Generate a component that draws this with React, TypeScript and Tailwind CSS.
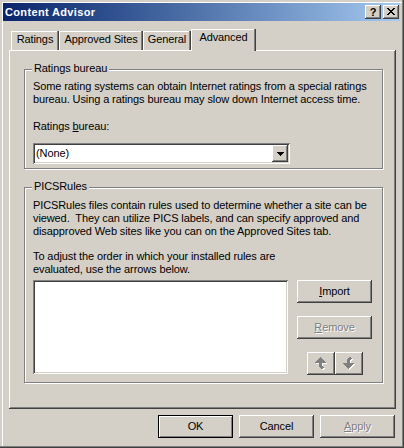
import React from "react";

const raised =
  "shadow-[inset_-1px_-1px_0_#404040,inset_1px_1px_0_#ffffff,inset_-2px_-2px_0_#808080,inset_2px_2px_0_#d4d0c8]";
const sunken =
  "shadow-[inset_1px_1px_0_#808080,inset_-1px_-1px_0_#ffffff,inset_2px_2px_0_#404040,inset_-2px_-2px_0_#d4d0c8]";
const disabledText = "text-[#808080] [text-shadow:1px_1px_0_#ffffff]";

function pixelPath(rows: string[]) {
  let d = "";
  rows.forEach((r, y) => {
    r.split("").forEach((c, x) => {
      if (c === "X") d += `M${x} ${y}h1v1h-1z`;
    });
  });
  return d;
}

function Pixels({ rows, color, shadow }: { rows: string[]; color: string; shadow?: string }) {
  const w = rows[0].length + (shadow ? 1 : 0);
  const h = rows.length + (shadow ? 1 : 0);
  const d = pixelPath(rows);
  return (
    <svg width={w} height={h} viewBox={`0 0 ${w} ${h}`} shapeRendering="crispEdges">
      {shadow && <path d={d} fill={shadow} transform="translate(1,1)" />}
      <path d={d} fill={color} />
    </svg>
  );
}

const UP = [
  ".....X.....",
  "....XXX....",
  "...XXXXX...",
  "..XXXXXXX..",
  ".XXXXXXXXX.",
  "XXXXXXXXXXX",
  "....XXX....",
  "....XXX....",
  "....XXX....",
  "....XXXX...",
  ".....XXXX..",
  "......XX...",
];
const DOWN = [...UP].reverse();

const CLOSE = [
  "XX....XX",
  ".XX..XX.",
  "..XXXX..",
  "...XX...",
  "..XXXX..",
  ".XX..XX.",
  "XX....XX",
];

const TRI = ["XXXXXXX", ".XXXXX.", "..XXX..", "...X..."];

function GroupBox({
  label,
  className,
  children,
}: {
  label: string;
  className: string;
  children: React.ReactNode;
}) {
  return (
    <div
      className={`relative border border-[#808080] shadow-[1px_1px_0_#ffffff,inset_1px_1px_0_#ffffff] ${className}`}
    >
      <span className="absolute left-[7px] top-[-8px] bg-[#d4d0c8] px-[2px] leading-[13px] whitespace-nowrap">
        {label}
      </span>
      {children}
    </div>
  );
}

function Tab({ label, width, selected }: { label: string; width: string; selected?: boolean }) {
  if (selected) {
    return (
      <div
        className={`${width} relative z-10 mb-[-1px] h-[22px] bg-[#d4d0c8] pt-[2px] text-center shadow-[inset_-1px_0_0_#404040,inset_-2px_0_0_#808080,inset_1px_1px_0_#ffffff] whitespace-nowrap`}
      >
        {label}
      </div>
    );
  }
  return (
    <div
      className={`${width} h-[19px] pt-[2px] text-center shadow-[inset_-1px_0_0_#404040,inset_-2px_0_0_#808080,inset_1px_1px_0_#ffffff] whitespace-nowrap`}
    >
      {label}
    </div>
  );
}

export default function App() {
  return (
    <div className="relative flex h-[448px] w-[404px] flex-col bg-[#d4d0c8] pl-[3px] pr-[4px] pt-[3px] font-['Liberation_Sans',Arial,sans-serif] text-[11px] leading-[13px] tracking-[-0.1px] text-black shadow-[inset_-1px_-1px_0_#404040,inset_-2px_-2px_0_#808080,inset_2px_2px_0_#d4d0c8,inset_3px_3px_0_#ffffff]">
      {/* Title bar */}
      <div className="flex h-[18px] items-center bg-linear-to-r from-[#0a246a] to-[#a6caf0] pl-[2px] pr-[1px]">
        <span className="flex-1 font-bold tracking-[0.35px] text-white whitespace-nowrap">Content Advisor</span>
        <div className="flex gap-[2px]">
          <div className={`${raised} flex h-[14px] w-[16px] items-center justify-center bg-[#d4d0c8] text-[11px] font-bold leading-[11px]`}>
            ?
          </div>
          <div className={`${raised} flex h-[14px] w-[16px] items-center justify-center bg-[#d4d0c8] pb-[1px]`}>
            <Pixels rows={CLOSE} color="#000000" />
          </div>
        </div>
      </div>

      {/* Body */}
      <div className="flex flex-col pl-[6px] pr-[4px] pt-[8px]">
        {/* Tabs */}
        <div className="flex h-[21px] items-end pl-[2px]">
          <Tab label="Ratings" width="w-[48px]" />
          <Tab label="Approved Sites" width="w-[84px]" />
          <Tab label="General" width="w-[48px]" />
          <Tab label="Advanced" width="w-[65px]" selected />
        </div>

        {/* Panel */}
        <div className="flex h-[359px] w-[387px] flex-col pl-[15px] pt-[19px] shadow-[inset_-1px_-1px_0_#404040,inset_1px_1px_0_#ffffff,inset_-2px_-2px_0_#808080]">
          <GroupBox label="Ratings bureau" className="h-[100px] w-[359px] pl-[8px] pt-[10px]">
            <div className="whitespace-nowrap">
              Some rating systems can obtain Internet ratings from a special ratings
              <br />
              bureau. Using a ratings bureau may slow down Internet access time.
            </div>
            <div className="mt-[14px] whitespace-nowrap">
              Ratings <u>b</u>ureau:
            </div>
            <div className={`${sunken} mt-[10px] flex h-[21px] w-[257px] items-center bg-white p-[2px]`}>
              <span className="flex-1 pl-[1px]">(None)</span>
              <div className={`${raised} flex h-[17px] w-[16px] items-center justify-center bg-[#d4d0c8]`}>
                <Pixels rows={TRI} color="#000000" />
              </div>
            </div>
          </GroupBox>

          <GroupBox label="PICSRules" className="mt-[18px] h-[196px] w-[359px] pl-[8px] pt-[11px]">
            <div className="whitespace-pre">
              {"PICSRules files contain rules used to determine whether a site can be\nviewed.  They can utilize PICS labels, and can specify approved and\ndisapproved Web sites like you can on the Approved Sites tab."}
            </div>
            <div className="mt-[12px] whitespace-pre">
              {"To adjust the order in which your installed rules are\nevaluated, use the arrows below."}
            </div>
            <div className="mt-[4px] flex gap-[9px]">
              <div className={`${sunken} h-[94px] w-[255px] bg-white`} />
              <div className="flex w-[75px] flex-col">
                <div className={`${raised} flex h-[23px] items-center justify-center`}>
                  <span>
                    <u>I</u>mport
                  </span>
                </div>
                <div className={`${raised} mt-[13px] flex h-[23px] items-center justify-center`}>
                  <span className={disabledText}>
                    <u>R</u>emove
                  </span>
                </div>
                <div className="mt-[13px] flex self-center">
                  <div className={`${raised} flex h-[23px] w-[28px] items-center justify-center`}>
                    <Pixels rows={UP} color="#808080" shadow="#ffffff" />
                  </div>
                  <div className={`${raised} flex h-[23px] w-[28px] items-center justify-center`}>
                    <Pixels rows={DOWN} color="#808080" shadow="#ffffff" />
                  </div>
                </div>
              </div>
            </div>
          </GroupBox>
        </div>

        {/* Bottom buttons */}
        <div className="mt-[6px] flex justify-end gap-[6px] pr-[1px]">
          <div className="flex h-[23px] w-[75px] items-center justify-center shadow-[inset_0_0_0_1px_#000000,inset_2px_2px_0_#ffffff,inset_-2px_-2px_0_#808080]">
            OK
          </div>
          <div className={`${raised} flex h-[23px] w-[75px] items-center justify-center`}>Cancel</div>
          <div className={`${raised} flex h-[23px] w-[75px] items-center justify-center`}>
            <span className={disabledText}>
              <u>A</u>pply
            </span>
          </div>
        </div>
      </div>
    </div>
  );
}
